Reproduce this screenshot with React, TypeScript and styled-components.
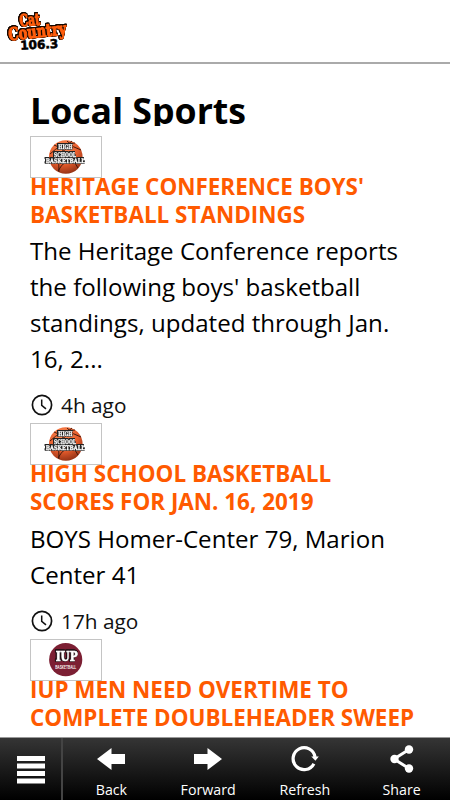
import React from "react";
import styled, { createGlobalStyle } from "styled-components";

const GlobalStyle = createGlobalStyle`
  * { box-sizing: border-box; }
  body { margin: 0; background: #fff; font-family: "Open Sans", sans-serif; color: #000; }
`;

const Screen = styled.div`
  width: 450px;
  height: 800px;
  display: flex;
  flex-direction: column;
  overflow: hidden;
  background: #fff;
`;

const Header = styled.header`
  flex: none;
  height: 64px;
  border-bottom: 2px solid #aaa;
  padding: 8px 0 0 4px;
`;

const Content = styled.main`
  flex: 1;
  min-height: 0;
  overflow: hidden;
  padding: 25px 30px 0;
`;

const Title = styled.h1`
  margin: 0 0 10px;
  height: 37px;
  overflow: hidden;
  font-size: 35.7px;
  line-height: 42px;
  font-weight: 700;
  white-space: nowrap;
`;

const Story = styled.article<{ $height: number }>`
  height: ${(p) => p.$height}px;
  white-space: nowrap;
`;

const Thumb = styled.div`
  width: 72px;
  height: 42px;
  border: 1px solid #c4c4c4;
  margin-bottom: -5px;
  svg { display: block; }
`;

const Headline = styled.h2<{ $gap: number }>`
  margin: 0 0 ${(p) => p.$gap}px;
  color: #ff5a00;
  font-size: 22.45px;
  line-height: 28px;
  font-weight: 700;
`;

const Summary = styled.p`
  margin: 0;
  font-size: 24.1px;
  line-height: 36px;
`;

const Time = styled.div`
  display: flex;
  align-items: center;
  gap: 7px;
  height: 30px;
  margin-top: 13px;
  font-size: 20.8px;
  line-height: 30px;
  color: #111;
`;

const Toolbar = styled.nav`
  flex: none;
  display: flex;
  height: 63px;
  border-top: 1px solid #999;
  background: linear-gradient(#353535, #000);
  color: #fff;
`;

const MenuButton = styled.div`
  width: 63px;
  border-right: 2px solid #444;
  display: flex;
  justify-content: center;
  padding-top: 18px;
`;

const ToolButton = styled.div`
  flex: 1;
  display: flex;
  flex-direction: column;
  align-items: center;
  padding-top: 6px;
  font-size: 14.2px;
  line-height: 20px;
  svg { display: block; margin-bottom: 6px; }
`;

const Outlined = styled.g<{ $edge: string; $width: number }>`
  filter: ${({ $edge: c, $width: w }) =>
    `drop-shadow(${w}px 0 0 ${c}) drop-shadow(-${w}px 0 0 ${c}) drop-shadow(0 ${w}px 0 ${c}) drop-shadow(0 -${w}px 0 ${c})`};
`;

const Logo = () => (
  <svg width="70" height="46" viewBox="4 8 70 46">
    <Outlined $edge="#150800" $width={0.5} fontFamily="'DejaVu Serif Condensed', 'DejaVu Serif', serif" fontWeight="700" fill="#ff5e0d" stroke="#ff5e0d" strokeWidth="1.1">
      <text transform="translate(20 26.6) rotate(-5)" fontSize="16.5" textLength="20.5" lengthAdjust="spacingAndGlyphs">Cat</text>
      <text transform="translate(9 40.5) rotate(-6)" fontSize="17.5" textLength="58" lengthAdjust="spacingAndGlyphs">Country</text>
    </Outlined>
    <text transform="translate(20.5 49.8) rotate(-3)" fontFamily="DejaVu Sans, sans-serif" fontSize="12.2" fontWeight="700" stroke="#000" strokeWidth=".6" textLength="38" lengthAdjust="spacingAndGlyphs">106.3</text>
  </svg>
);

const BasketballBadge = () => (
  <svg width="70" height="40" viewBox="31 137 70 40">
    <defs>
      <radialGradient id="ball" cx=".4" cy=".25" r=".8">
        <stop offset="0" stopColor="#ff8a52" />
        <stop offset=".6" stopColor="#e25a2b" />
        <stop offset="1" stopColor="#8c2e14" />
      </radialGradient>
    </defs>
    <circle cx="65.8" cy="157" r="16.8" fill="url(#ball)" />
    <g fill="none" stroke="#351208" strokeWidth=".9">
      <path d="M54 145Q68 149 78 168M50 154Q61 143 75 143M72 141Q56 151 59 172M82 158Q64 158 58 171M67 141Q73 148 81 150" />
    </g>
    <Outlined $edge="#222" $width={0.5} fontFamily="DejaVu Serif, serif" fontWeight="700" fontSize="6.2" fill="#fff" stroke="#fff" strokeWidth=".3" textAnchor="middle">
      <text x="65.3" y="149.4" textLength="14" lengthAdjust="spacingAndGlyphs">HIGH</text>
      <text x="65" y="156.5" textLength="22" lengthAdjust="spacingAndGlyphs">SCHOOL</text>
      <text x="65.3" y="163.3" textLength="39" lengthAdjust="spacingAndGlyphs">BASKETBALL</text>
    </Outlined>
  </svg>
);

const IupBadge = () => (
  <svg width="70" height="40" viewBox="31 640 70 40">
    <circle cx="65.7" cy="659.7" r="16.6" fill="#7c1f33" />
    <g fontWeight="700" fill="#fff" textAnchor="middle">
      <Outlined $edge="#241016" $width={0.6}>
        <text x="66.7" y="661.3" fontFamily="DejaVu Serif, serif" fontSize="13.5" stroke="#fff" strokeWidth=".7" textLength="22" lengthAdjust="spacingAndGlyphs">IUP</text>
      </Outlined>
      <text x="65.7" y="668.6" fontSize="6" textLength="21" lengthAdjust="spacingAndGlyphs" fontFamily="Roboto, sans-serif" fontWeight="500">BASKETBALL</text>
    </g>
  </svg>
);

const Clock = () => (
  <svg width="24" height="24" viewBox="0 0 24 24" fill="none" stroke="#111">
    <circle cx="12" cy="12" r="9.6" strokeWidth="1.7" />
    <path d="M11.7 6.5V12.3L16 15.8" strokeWidth="1.5" />
  </svg>
);

const MenuIcon = () => (
  <svg width="28" height="28" viewBox="0 0 28 28" fill="#fff">
    <path d="M0 0h28v5H0zM0 7.4h28v5H0zM0 14.9h28v5H0zM0 22.4h28v5H0z" />
  </svg>
);

const BackIcon = () => (
  <svg width="28" height="30" viewBox="0 0 28 30" fill="#fff">
    <path d="M0 15L14.5 4V10H28V20H14.5V26Z" />
  </svg>
);

const ForwardIcon = () => (
  <svg width="28" height="30" viewBox="0 0 28 30" fill="#fff">
    <path d="M28 15L13.5 4V10H0V20H13.5V26Z" />
  </svg>
);

const RefreshIcon = () => (
  <svg width="28" height="30" viewBox="0 0 28 30">
    <path d="M22.9 19.7A11 11 0 1 1 24 13" fill="none" stroke="#fff" strokeWidth="3.2" />
    <path d="M20.3 12.6H27.8L24.4 16.8Z" fill="#fff" />
  </svg>
);

const ShareIcon = () => (
  <svg width="28" height="30" viewBox="0 0 28 30" fill="#fff">
    <path d="M21 5.5L6 15L21 24.5" fill="none" stroke="#fff" strokeWidth="3" />
    <circle cx="21" cy="5.5" r="4.2" />
    <circle cx="6.5" cy="15" r="4.2" />
    <circle cx="21" cy="24.5" r="4.2" />
  </svg>
);

const stories = [
  {
    badge: "ball",
    height: 287,
    gap: 4,
    headline: ["HERITAGE CONFERENCE BOYS'", "BASKETBALL STANDINGS"],
    summary: ["The Heritage Conference reports", "the following boys' basketball", "standings, updated through Jan.", "16, 2..."],
    time: "4h ago",
  },
  {
    badge: "ball",
    height: 216,
    gap: 5,
    headline: ["HIGH SCHOOL BASKETBALL", "SCORES FOR JAN. 16, 2019"],
    summary: ["BOYS Homer-Center 79, Marion", "Center 41"],
    time: "17h ago",
  },
  {
    badge: "iup",
    height: 120,
    gap: 5,
    headline: ["IUP MEN NEED OVERTIME TO", "COMPLETE DOUBLEHEADER SWEEP"],
    summary: [],
    time: "",
  },
];

const tools = [
  { label: "Back", Icon: BackIcon },
  { label: "Forward", Icon: ForwardIcon },
  { label: "Refresh", Icon: RefreshIcon },
  { label: "Share", Icon: ShareIcon },
];

const Line = styled.span`
  display: block;
`;

export default function App() {
  return (
    <>
      <GlobalStyle />
      <Screen>
        <Header><Logo /></Header>
        <Content>
          <Title>Local Sports</Title>
          {stories.map((s) => (
            <Story key={s.headline[0]} $height={s.height}>
              <Thumb>{s.badge === "ball" ? <BasketballBadge /> : <IupBadge />}</Thumb>
              <Headline $gap={s.gap}>{s.headline.map((l) => <Line key={l}>{l}</Line>)}</Headline>
              <Summary>{s.summary.map((l) => <Line key={l}>{l}</Line>)}</Summary>
              {s.time && <Time><Clock />{s.time}</Time>}
            </Story>
          ))}
        </Content>
        <Toolbar>
          <MenuButton><MenuIcon /></MenuButton>
          {tools.map(({ label, Icon }) => (
            <ToolButton key={label}><Icon />{label}</ToolButton>
          ))}
        </Toolbar>
      </Screen>
    </>
  );
}
